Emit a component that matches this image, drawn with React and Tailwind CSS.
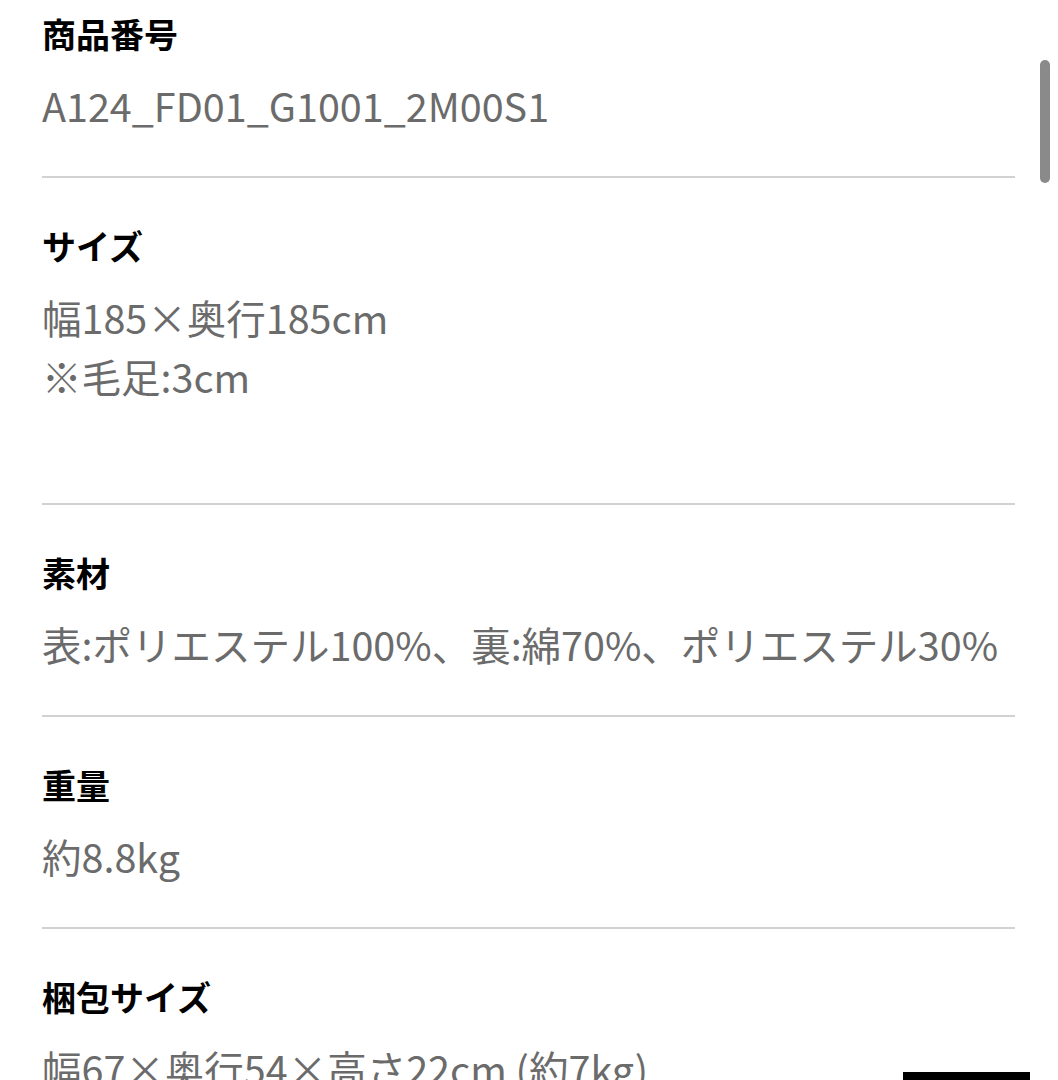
import React from "react";

const rows = [
  { label: "商品番号", lines: ["A124_FD01_G1001_2M00S1"] },
  { label: "サイズ", lines: ["幅185×奥行185cm", "※毛足:3cm", ""] },
  { label: "素材", lines: ["表:ポリエステル100%、裏:綿70%、ポリエステル30%"] },
  { label: "重量", lines: ["約8.8kg"] },
  { label: "梱包サイズ", lines: ["幅67×奥行54×高さ22cm (約7kg)"] },
];

export default function App() {
  return (
    <div
      className="relative h-[1080px] w-full overflow-hidden bg-white"
      style={{ fontFamily: '"Noto Sans CJK JP", "Noto Sans", sans-serif' }}
    >
      <div className="pl-[42px] pr-[43px]">
        {rows.map((row, i) => (
          <div
            key={row.label}
            className={
              (i === 0 ? "pt-[12px] " : "pt-[46px] ") +
              "pb-[42px] border-b-2 border-[#d2d2d2]"
            }
          >
            <div className="h-[44px] text-[34px] font-bold leading-[44px] text-black">
              {row.label}
            </div>
            <div className="mt-[19px] text-[39.5px] leading-[59px] text-[#6b6b6b] whitespace-nowrap">
              {row.lines.map((l, j) => (
                <div key={j} className={l ? "h-[59px]" : "h-[56px]"}>{l}</div>
              ))}
            </div>
          </div>
        ))}
      </div>

      {/* scrollbar thumb */}
      <div className="absolute left-[1040px] top-[60px] h-[123px] w-[10px] rounded-full bg-[#8a8a8a]" />

      {/* floating button edge */}
      <div className="absolute left-[903px] top-[1072px] h-[40px] w-[127px] bg-black" />
    </div>
  );
}
